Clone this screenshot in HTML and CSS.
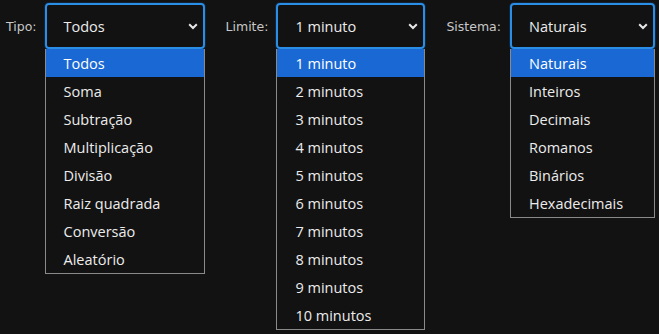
FILE: index.html
```html
<html>
<head>
  <title>Opções</title>
  <link rel="stylesheet" href="styles.css">
</head>
<body>
  <section class="filters">
    <!-- tipo -->
    <div class="field">
      <label class="field-label">Tipo:</label>
      <div class="picker picker-tipo">
        <div class="picker-box">
          <span>Todos</span>
          <svg class="chevron" width="10" height="7" viewBox="0 0 10 7"><path d="M1.2 1.2 L5 5 L8.8 1.2" /></svg>
        </div>
        <ul class="picker-list">
          <li class="selected">Todos</li>
          <li>Soma</li>
          <li>Subtração</li>
          <li>Multiplicação</li>
          <li>Divisão</li>
          <li>Raiz quadrada</li>
          <li>Conversão</li>
          <li>Aleatório</li>
        </ul>
      </div>
    </div>
    <!-- limite -->
    <div class="field">
      <label class="field-label">Limite:</label>
      <div class="picker picker-limite">
        <div class="picker-box">
          <span>1 minuto</span>
          <svg class="chevron" width="10" height="7" viewBox="0 0 10 7"><path d="M1.2 1.2 L5 5 L8.8 1.2" /></svg>
        </div>
        <ul class="picker-list">
          <li class="selected">1 minuto</li>
          <li>2 minutos</li>
          <li>3 minutos</li>
          <li>4 minutos</li>
          <li>5 minutos</li>
          <li>6 minutos</li>
          <li>7 minutos</li>
          <li>8 minutos</li>
          <li>9 minutos</li>
          <li>10 minutos</li>
        </ul>
      </div>
    </div>
    <!-- sistema -->
    <div class="field field-wide">
      <label class="field-label">Sistema:</label>
      <div class="picker picker-sistema">
        <div class="picker-box">
          <span>Naturais</span>
          <svg class="chevron" width="10" height="7" viewBox="0 0 10 7"><path d="M1.2 1.2 L5 5 L8.8 1.2" /></svg>
        </div>
        <ul class="picker-list">
          <li class="selected">Naturais</li>
          <li>Inteiros</li>
          <li>Decimais</li>
          <li>Romanos</li>
          <li>Binários</li>
          <li>Hexadecimais</li>
        </ul>
      </div>
    </div>
  </section>
</body>
</html>
```

FILE: styles.css
```css
html, body {
  margin: 0;
  background: #121212;
}
body {
  padding: 3px 0 0 6px;
  font: 14.5px "Open Sans", Arial, sans-serif;
  color: #ececec;
}
.filters {
  display: flex;
  align-items: flex-start;
  gap: 21px;
}
.field {
  display: flex;
  align-items: flex-start;
  gap: 8px;
}
.field-wide {
  gap: 9px;
}
.field-label {
  margin-top: 16px;
  font: 12.5px "DejaVu Sans", sans-serif;
  color: #c8c8c8;
}
.picker {
  display: flex;
  flex-direction: column;
}
.picker-tipo { width: 160px; }
.picker-limite { width: 149px; }
.picker-sistema { width: 145px; }
.picker-box {
  height: 46px;
  box-sizing: border-box;
  border: 2px solid #2a8de6;
  border-radius: 4px;
  box-shadow: 0 0 0 1px #142436;
  display: flex;
  align-items: center;
  justify-content: space-between;
  padding: 1px 5px 0 17px;
}
.chevron {
  fill: none;
  stroke: #e8e8e8;
  stroke-width: 2;
}
.picker-list {
  margin: 0;
  padding: 0;
  list-style: none;
  border: 1px solid #8a8a8a;
  border-top: none;
}
.picker-list li {
  height: 28px;
  line-height: 29px;
  padding-left: 18px;
}
.picker-list li.selected {
  background: #1a68d4;
  color: #fff;
}
```
